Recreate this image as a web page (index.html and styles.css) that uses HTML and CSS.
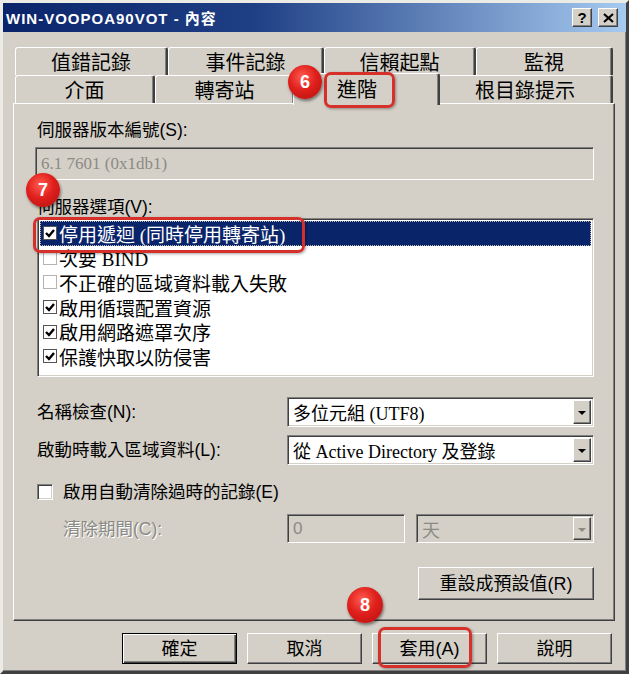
FILE: index.html
```html
<!DOCTYPE html>
<html lang="zh-Hant">
  <head>
    <meta charset="UTF-8" />
    <title>WIN-VOOPOA90VOT - 內容</title>
    <link rel="stylesheet" href="styles.css">
  </head>
  <body>
    <div class="window">
      <!-- Title bar -->
      <div class="titlebar">
        <span class="title">WIN-VOOPOA90VOT - 內容</span>
        <div class="caption-buttons">
          <span class="cap-btn">?</span>
          <span class="cap-btn">
            <svg width="11" height="10" viewBox="0 0 11 10"><path d="M1 1 L10 9 M10 1 L1 9" stroke="#000" stroke-width="2.2"/></svg>
          </span>
        </div>
      </div>

      <div class="client">
        <!-- Tabs -->
        <div class="tab-row back">
          <div class="tab">值錯記錄</div>
          <div class="tab">事件記錄</div>
          <div class="tab">信賴起點</div>
          <div class="tab">監視</div>
        </div>
        <div class="tab-row front">
          <div class="tab">介面</div>
          <div class="tab">轉寄站</div>
          <div class="tab active">進階</div>
          <div class="tab">根目錄提示</div>
        </div>

        <!-- Advanced page -->
        <div class="panel">
          <div class="label">伺服器版本編號(S):</div>
          <div class="edit version disabled">6.1 7601 (0x1db1)</div>

          <div class="label options-label">伺服器選項(V):</div>
          <ul class="listbox">
            <li class="selected"><span class="lchk on"></span>停用遞迴 (同時停用轉寄站)</li>
            <li><span class="lchk"></span>次要 BIND</li>
            <li><span class="lchk"></span>不正確的區域資料載入失敗</li>
            <li><span class="lchk on"></span>啟用循環配置資源</li>
            <li><span class="lchk on"></span>啟用網路遮罩次序</li>
            <li><span class="lchk on"></span>保護快取以防侵害</li>
          </ul>

          <div class="form-row first">
            <span class="label">名稱檢查(N):</span>
            <div class="combo"><span class="combo-text">多位元組 (UTF8)</span><span class="drop"></span></div>
          </div>
          <div class="form-row">
            <span class="label">啟動時載入區域資料(L):</span>
            <div class="combo"><span class="combo-text">從 Active Directory 及登錄</span><span class="drop"></span></div>
          </div>

          <label class="check-row">
            <span class="chk"></span>
            <span class="label">啟用自動清除過時的記錄(E)</span>
          </label>

          <div class="form-row scavenge">
            <span class="label muted">清除期間(C):</span>
            <div class="period">
              <div class="edit disabled small">0</div>
              <div class="combo disabled unit"><span class="combo-text">天</span><span class="drop"></span></div>
            </div>
          </div>

          <div class="reset-row">
            <button class="btn reset">重設成預設值(R)</button>
          </div>
        </div>

        <!-- Dialog buttons -->
        <div class="dialog-buttons">
          <button class="btn default">確定</button>
          <button class="btn">取消</button>
          <button class="btn">套用(A)</button>
          <button class="btn">說明</button>
        </div>
      </div>

      <!-- Tutorial annotations -->
      <span class="badge step-6">6</span>
      <span class="badge step-7">7</span>
      <span class="badge step-8">8</span>
      <span class="ring ring-tab"></span>
      <span class="ring ring-option"></span>
      <span class="ring ring-apply"></span>
    </div>
  </body>
</html>
```
FILE: styles.css
```css
* {
  box-sizing: border-box;
}

body {
  margin: 0;
  background: #fff;
  font-family: "Liberation Sans", "Noto Sans CJK TC", sans-serif;
  font-size: 17px;
  color: #000;
}

.window {
  position: relative;
  width: 629px;
  height: 674px;
  background: #d4d0c8;
  border: 3px solid;
  border-color: #ecebe6 #404040 #404040 #ecebe6;
  box-shadow: inset -1px -1px #808080;
}

/* Title bar */
.titlebar {
  height: 29px;
  display: flex;
  align-items: center;
  justify-content: space-between;
  padding: 0 8px 0 3px;
  background: linear-gradient(to right, #0a246a 0%, #1f3f85 40%, #a6caf0 100%);
}

.title {
  color: #fff;
  font-weight: bold;
  font-size: 15px;
  letter-spacing: 1px;
}

.caption-buttons {
  display: flex;
  gap: 6px;
}

.cap-btn {
  width: 20px;
  height: 19px;
  display: flex;
  align-items: center;
  justify-content: center;
  background: #d4d0c8;
  border: 1px solid;
  border-color: #fff #404040 #404040 #fff;
  box-shadow: inset -1px -1px #808080;
  font-weight: bold;
  font-size: 15px;
  line-height: 1;
}

.client {
  padding: 15px 11px 0 10px;
}

/* Tabs */
.tab-row {
  display: grid;
  height: 28px;
  margin-left: 2px;
  width: 598px;
}

.tab-row.back {
  grid-template-columns: 153px 156px 152px 137px;
}

.tab-row.front {
  grid-template-columns: 140px 140px 143px 175px;
}

.tab {
  display: flex;
  align-items: center;
  justify-content: center;
  background: #d4d0c8;
  border-top: 1px solid #fff;
  border-left: 1px solid #fff;
  border-right: 2px solid #404040;
  border-radius: 3px 3px 0 0;
  box-shadow: inset -1px 0 #808080;
  font-size: 20px;
  line-height: 1;
  padding-top: 2px;
}

.tab.active {
  position: relative;
  z-index: 1;
  margin: -2px -2px -2px;
  padding-top: 0;
  padding-right: 18px;
}

/* Panel */
.panel {
  height: 518px;
  border: 1px solid;
  border-color: #fff #404040 #404040 #fff;
  box-shadow: inset -1px -1px #808080;
  padding: 16px 20px 0 23px;
}

.label {
  display: block;
  height: 20px;
  line-height: 20px;
  font-size: 17.5px;
  white-space: nowrap;
}

.muted {
  color: #8c8a85;
  text-shadow: 1px 1px #fff;
}

.edit {
  display: flex;
  align-items: center;
  background: #fff;
  border: 1px solid;
  border-color: #808080 #fff #fff #808080;
  box-shadow: inset 1px 1px #404040, inset -1px -1px #d4d0c8;
  padding-left: 5px;
  font-family: "Liberation Serif", "Noto Sans CJK TC", serif;
  font-size: 17px;
}

.edit.disabled {
  background: #d4d0c8;
  color: #8c8a85;
}

.version {
  height: 33px;
  margin: 7px 0 0 -2px;
}

.options-label {
  margin-top: 17px;
}

/* Server options list */
.listbox {
  list-style: none;
  margin: 1px 0 0;
  height: 159px;
  padding: 2px 2px 0;
  background: #fff;
  border: 1px solid;
  border-color: #808080 #fff #fff #808080;
  box-shadow: inset 1px 1px #404040, inset -1px -1px #d4d0c8;
  font-family: "Liberation Serif", "Noto Sans CJK TC", serif;
  font-size: 19px;
}

.listbox li {
  display: flex;
  align-items: center;
  height: 24.6px;
  padding-left: 3px;
  white-space: nowrap;
}

.listbox li.selected {
  background: #0a246a;
  color: #fff;
  outline: 1px dotted #b8b8b8;
  outline-offset: -1px;
}

.lchk {
  flex: none;
  width: 14px;
  height: 14px;
  margin-right: 2px;
  background: #fff center / 12px 12px no-repeat;
  border: 1px solid #b4b4b4;
}

.lchk.on {
  border-color: #555;
  background-image: url("data:image/svg+xml,%3Csvg xmlns='http://www.w3.org/2000/svg' viewBox='0 0 12 12'%3E%3Cpath d='M2 6 L5 9 L10 3' fill='none' stroke='%23000' stroke-width='2.4'/%3E%3C/svg%3E");
}

/* Combo rows */
.form-row {
  display: grid;
  grid-template-columns: 250px 1fr;
  align-items: center;
  margin-top: 8px;
  height: 30px;
}

.form-row.first {
  margin-top: 20px;
}

.combo {
  display: flex;
  align-items: stretch;
  height: 30px;
  padding: 2px;
  background: #fff;
  border: 1px solid;
  border-color: #808080 #fff #fff #808080;
  box-shadow: inset 1px 1px #404040, inset -1px -1px #d4d0c8;
}

.combo-text {
  flex: 1;
  display: flex;
  align-items: center;
  padding-left: 3px;
  font-family: "Liberation Serif", "Noto Sans CJK TC", serif;
  font-size: 18px;
  white-space: nowrap;
}

.drop {
  position: relative;
  width: 18px;
  background: #d4d0c8;
  border: 1px solid;
  border-color: #fff #404040 #404040 #fff;
  box-shadow: inset -1px -1px #808080;
}

.drop::after {
  content: "";
  position: absolute;
  left: 4px;
  top: 10px;
  border-left: 4px solid transparent;
  border-right: 4px solid transparent;
  border-top: 4px solid #000;
}

.combo.disabled {
  background: #d4d0c8;
}

.combo.disabled .combo-text {
  color: #8c8a85;
}

.combo.disabled .drop::after {
  border-top-color: #8c8a85;
}

/* Scavenging */
.check-row {
  display: flex;
  align-items: center;
  gap: 10px;
  height: 20px;
  margin-top: 17px;
}

.chk {
  width: 16px;
  height: 16px;
  background: #fff;
  border: 1px solid;
  border-color: #808080 #fff #fff #808080;
  box-shadow: inset 1px 1px #404040, inset -1px -1px #d4d0c8;
}

.scavenge {
  margin-top: 12px;
  height: 29px;
}

.scavenge .label {
  padding-left: 26px;
}

.period {
  display: flex;
  gap: 11px;
  height: 29px;
}

.edit.small {
  width: 118px;
  font-family: "Liberation Sans", sans-serif;
}

.combo.unit {
  flex: 1;
  height: 29px;
}

.reset-row {
  display: flex;
  justify-content: flex-end;
  margin-top: 24px;
}

/* Buttons */
.btn {
  height: 31px;
  width: 115px;
  padding: 0;
  background: #d4d0c8;
  border: 1px solid;
  border-color: #fff #404040 #404040 #fff;
  box-shadow: inset -1px -1px #808080;
  font-family: "Liberation Sans", "Noto Sans CJK TC", sans-serif;
  font-size: 18px;
  line-height: 1;
  color: #000;
}

.btn.reset {
  width: 176px;
  height: 33px;
}

.btn.default {
  border-color: #000;
  box-shadow: inset 1px 1px #fff, inset -1px -1px #404040, inset -2px -2px #808080;
}

.dialog-buttons {
  display: flex;
  justify-content: flex-end;
  gap: 10px;
  margin-top: 12px;
  padding-right: 3px;
}

/* Annotations */
.badge {
  position: absolute;
  width: 34px;
  height: 34px;
  border-radius: 50%;
  display: flex;
  align-items: center;
  justify-content: center;
  background: radial-gradient(circle at 42% 35%, #ff5d52 0%, #e0201c 45%, #b30f0f 100%);
  box-shadow: 1px 2px 3px rgba(0, 0, 0, 0.45);
  color: #fff;
  font-weight: bold;
  font-size: 18px;
  z-index: 3;
}

.step-6 {
  left: 285px;
  top: 62px;
}

.step-7 {
  left: 23px;
  top: 170px;
}

.step-8 {
  left: 344px;
  top: 584px;
  width: 36px;
  height: 36px;
}

.ring {
  position: absolute;
  border: 3px solid #d6302b;
  border-radius: 7px;
  box-shadow: 1px 1px 3px rgba(0, 0, 0, 0.35);
  z-index: 2;
}

.ring-tab {
  left: 321px;
  top: 69px;
  width: 71px;
  height: 36px;
}

.ring-option {
  left: 30px;
  top: 214px;
  width: 272px;
  height: 36px;
}

.ring-apply {
  left: 375px;
  top: 624px;
  width: 94px;
  height: 41px;
}
```
